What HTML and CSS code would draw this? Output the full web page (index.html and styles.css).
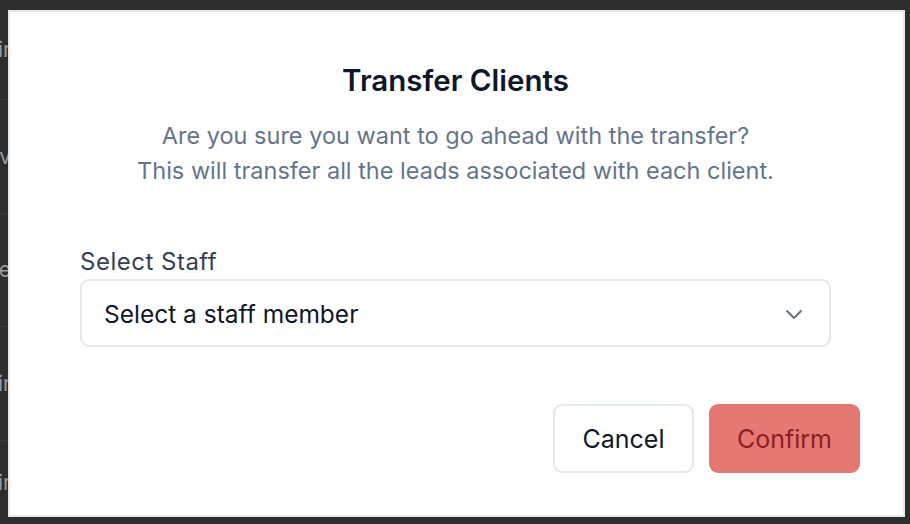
FILE: index.html
```html
<!DOCTYPE html>
<html>
<head>
<meta charset="utf-8">
<link rel="stylesheet" href="styles.css">
</head>
<body>
<div class="page">
  <div class="rows">
    <div class="row"><span class="cell">Kir</span></div>
    <div class="row"><span class="cell">Dav</span></div>
    <div class="row"><span class="cell">Mike</span></div>
    <div class="row"><span class="cell">Kir</span></div>
    <div class="row"><span class="cell">Kir</span></div>
  </div>
  <div class="modal">
    <h2 class="title">Transfer Clients</h2>
    <p class="desc">Are you sure you want to go ahead with the transfer?<br>This will transfer all the leads associated with each client.</p>
    <div class="field">
      <label class="label">Select Staff</label>
      <div class="select">
        <span class="select-text">Select a staff member</span>
        <svg class="chev" width="18" height="11" viewBox="0 0 18 11" fill="none" stroke="currentColor" stroke-width="2" stroke-linecap="round" stroke-linejoin="round"><path d="M2 2l7 7 7-7"/></svg>
      </div>
    </div>
    <div class="actions">
      <button class="btn btn-cancel">Cancel</button>
      <button class="btn btn-confirm">Confirm</button>
    </div>
  </div>
</div>
</body>
</html>
```
FILE: styles.css
```css
* { box-sizing: border-box; }
html, body { margin: 0; padding: 0; }
body {
  background: #2d2d2d;
  font-family: "Inter", "Noto Sans", sans-serif;
  width: 910px;
  height: 524px;
  overflow: hidden;
}
.page { position: relative; width: 910px; height: 524px; overflow: hidden; }
.rows { display: flex; flex-direction: column; height: 524px; overflow: hidden; }
.row {
  flex: none;
  height: 113.5px;
  border-bottom: 1px solid #3a3a3a;
  display: flex;
  align-items: center;
  justify-content: flex-end;
  width: 11px;
  white-space: nowrap;
}
.row:first-child { height: 100px; }
.row:last-child { height: 84px; border-bottom: none; }
.cell {
  color: #9a9a9a;
  font-size: 21px;
}
.modal {
  position: absolute;
  left: 8px;
  top: 10px;
  width: 897px;
  height: 507px;
  background: #fff;
  border: 2px solid #e5e7eb;
  padding: 50px 72px 0 70px;
  display: flex;
  flex-direction: column;
}
.modal > * { flex: none; }
.title {
  margin: 0;
  text-align: center;
  font-size: 29.5px;
  line-height: 36px;
  font-weight: 600;
  color: #0f172a;
}
.desc {
  margin: 20px 0 0;
  text-align: center;
  font-size: 23.5px;
  line-height: 35px;
  color: #64748b;
}
.field { margin-top: 59px; display: flex; flex-direction: column; gap: 2px; }
.field > * { flex: none; }
.label {
  font-size: 24px;
  line-height: 30px;
  color: #334155;
  letter-spacing: 0.5px;
}
.select {
  height: 68px;
  border: 2px solid #e5e7eb;
  border-radius: 9px;
  display: flex;
  align-items: center;
  justify-content: space-between;
  padding: 0 26px 0 22px;
}
.select-text { font-size: 24.5px; color: #0f172a; padding-top: 2px; }
.chev { color: #6b7280; margin-top: 2px; }
.actions {
  margin-top: 57px;
  margin-right: -29px;
  display: flex;
  justify-content: flex-end;
  gap: 15px;
}
.btn {
  flex: none;
  height: 69px;
  border-radius: 9px;
  font-family: inherit;
  font-size: 25px;
}
.btn-cancel {
  width: 141px;
  background: #fff;
  border: 2px solid #e2e8f0;
  color: #0f172a;
}
.btn-confirm {
  width: 151px;
  background: #e57873;
  border: none;
  color: #8b1f1f;
}
```
